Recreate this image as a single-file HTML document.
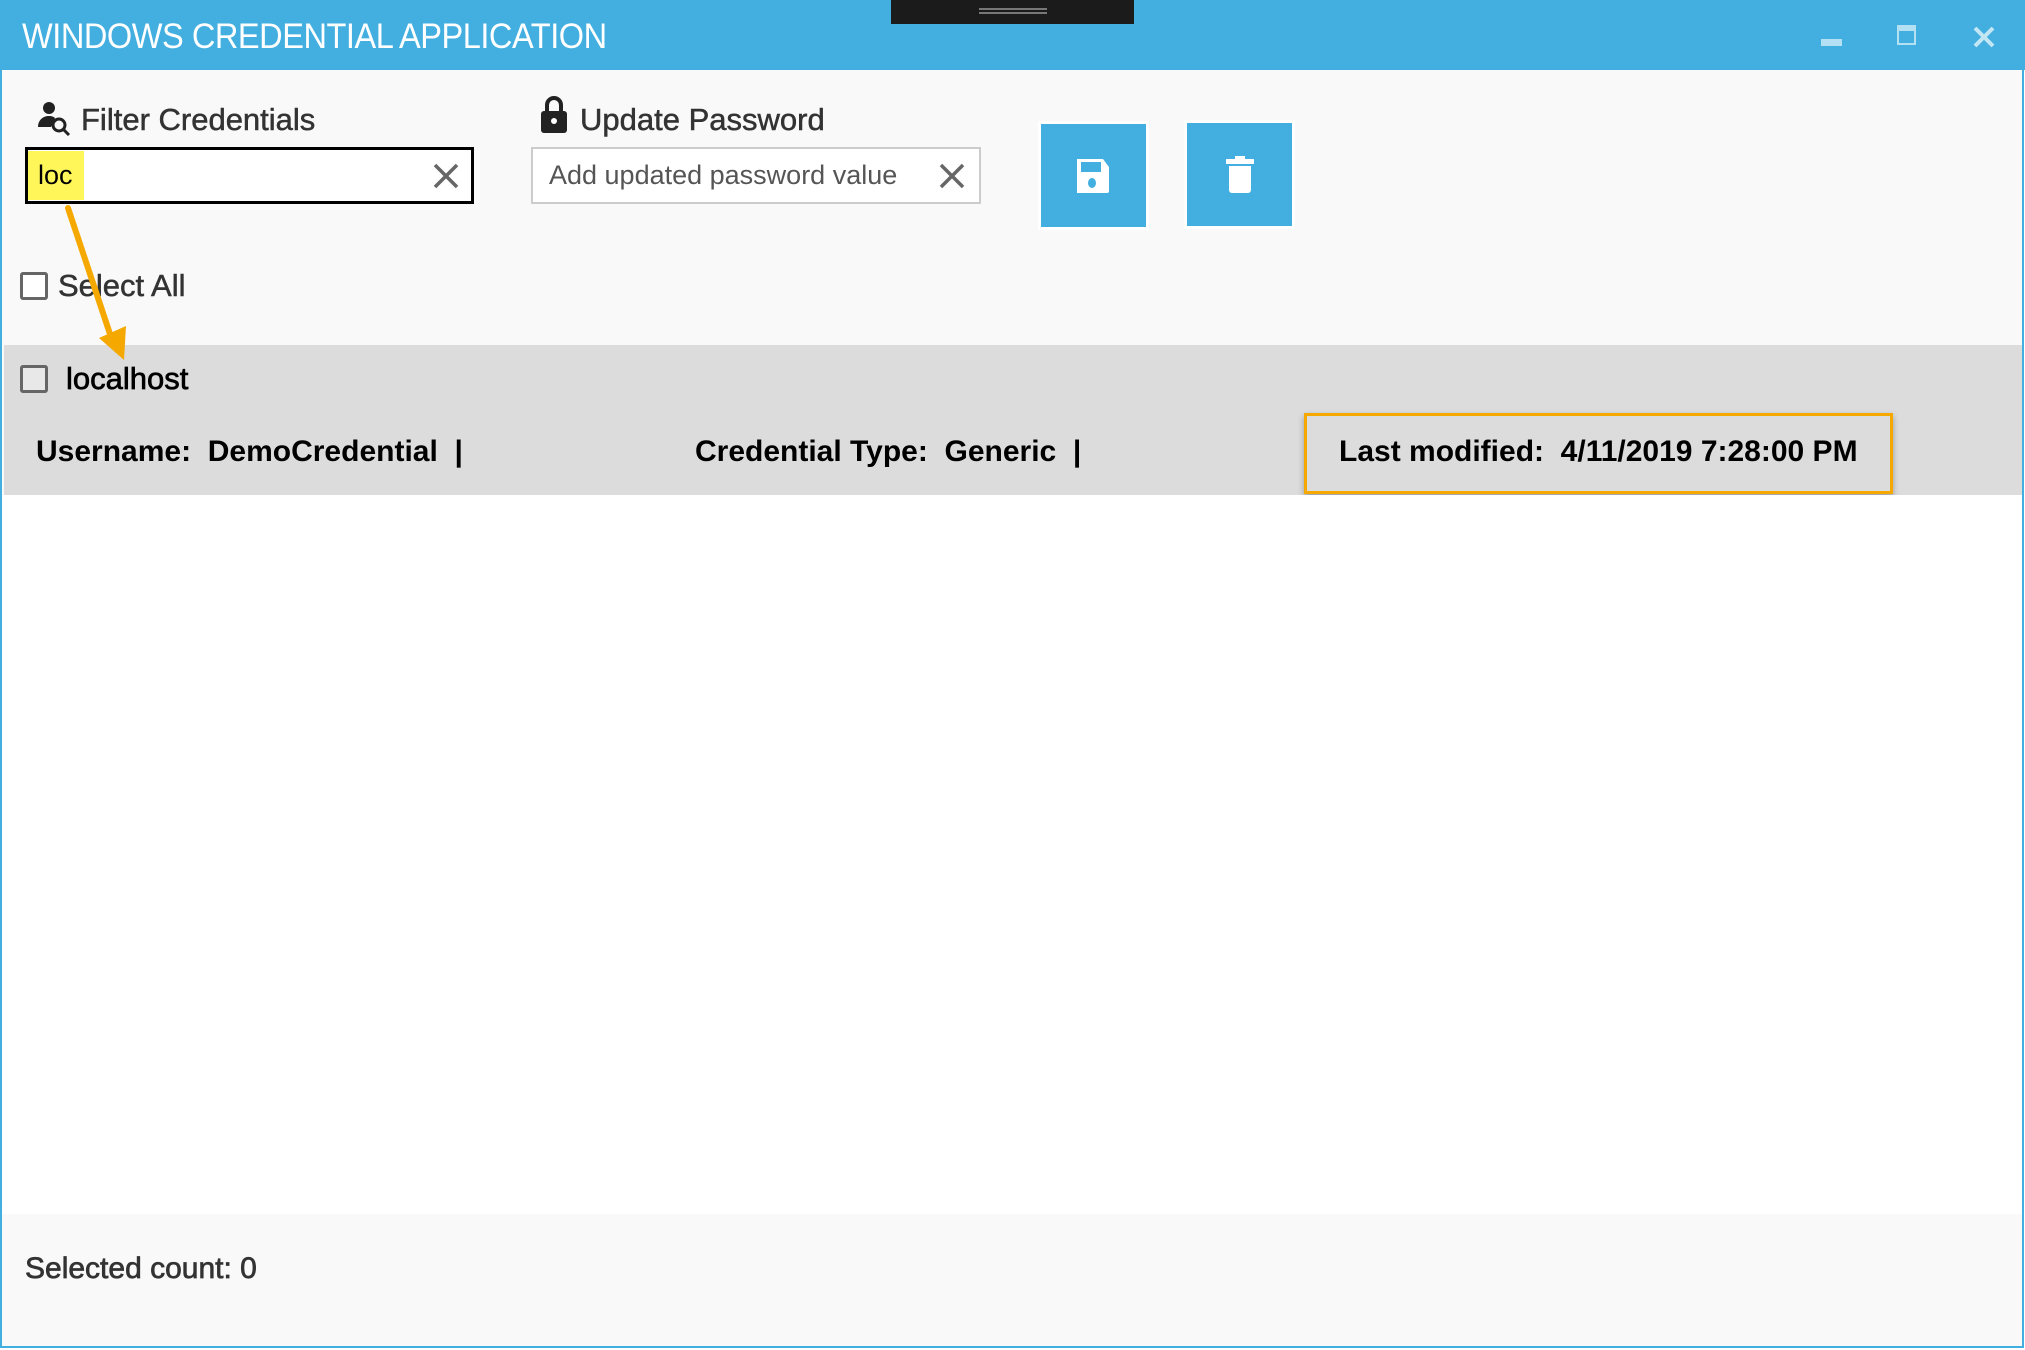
<!DOCTYPE html>
<html><head><meta charset="utf-8"><style>
*{margin:0;padding:0;box-sizing:border-box}
body{width:2025px;height:1350px;background:#fff;position:relative;overflow:hidden;font-family:"Liberation Sans",sans-serif;color:#222}
.a{position:absolute}
.t{position:absolute;white-space:nowrap;line-height:1}
</style></head><body>
<div class="a" style="left:0;top:0;width:2024px;height:1348px;background:#f9f9f9;border:2px solid #42afe0;border-top:none"></div>
<div class="a" style="left:0;top:0;width:2025px;height:70px;background:#42afe0"></div>
<div class="t" style="left:22px;top:19px;font-size:35px;color:#fff;letter-spacing:-0.5px;transform:scaleX(0.93);transform-origin:left">WINDOWS CREDENTIAL APPLICATION</div>
<div class="a" style="left:891px;top:0;width:243px;height:24px;background:#1b1b1b"></div>
<div class="a" style="left:979px;top:8px;width:68px;height:2px;background:#777"></div>
<div class="a" style="left:979px;top:12px;width:68px;height:2px;background:#777"></div>
<div class="a" style="left:1821px;top:39px;width:21px;height:7px;background:#b3e0f3"></div>
<div class="a" style="left:1897px;top:25px;width:19px;height:20px;border:2px solid #b3e0f3;border-top-width:6px"></div>
<svg class="a" style="left:1972px;top:25px" width="24" height="24"><path d="M3 3L21 21M21 3L3 21" stroke="#c3e6f5" stroke-width="4"/></svg>

<svg class="a" style="left:36px;top:101px" width="36" height="35" viewBox="0 0 36 35"><circle cx="13" cy="7" r="6" fill="#222"/><path d="M2 26c0-7 5-11 11-11 3 0 5 1 6 2l-4 9z" fill="#222"/><circle cx="23" cy="24" r="6" fill="none" stroke="#222" stroke-width="3"/><path d="M27 28l6 6" stroke="#222" stroke-width="3"/></svg>
<div class="t" style="left:81px;top:104px;font-size:31px;color:#333;-webkit-text-stroke:0.5px #333">Filter Credentials</div>
<div class="a" style="left:25px;top:147px;width:449px;height:57px;background:#fff;border:3px solid #000"></div>
<div class="a" style="left:28px;top:151px;width:56px;height:49px;background:#fff75a"></div>
<div class="t" style="left:38px;top:162px;font-size:27px;color:#000">loc</div>
<svg class="a" style="left:432px;top:162px" width="28" height="28"><path d="M3 3L25 25M25 3L3 25" stroke="#666" stroke-width="3.5"/></svg>

<svg class="a" style="left:540px;top:96px" width="28" height="38" viewBox="0 0 28 38"><path d="M7 16V9a7 7 0 0 1 14 0v7" fill="none" stroke="#222" stroke-width="4"/><rect x="1" y="15" width="26" height="22" rx="3" fill="#222"/><circle cx="14" cy="25" r="3" fill="#fff"/></svg>
<div class="t" style="left:580px;top:104px;font-size:31px;color:#333;-webkit-text-stroke:0.5px #333">Update Password</div>
<div class="a" style="left:531px;top:147px;width:450px;height:57px;background:#fff;border:2px solid #ccc"></div>
<div class="t" style="left:549px;top:162px;font-size:27px;color:#555">Add updated password value</div>
<svg class="a" style="left:938px;top:162px" width="28" height="28"><path d="M3 3L25 25M25 3L3 25" stroke="#666" stroke-width="3.5"/></svg>

<div class="a" style="left:1038px;top:121px;width:111px;height:109px;background:#fff"></div>
<div class="a" style="left:1041px;top:124px;width:105px;height:103px;background:#42afe0"></div>
<svg class="a" style="left:1075px;top:157px" width="36" height="38" viewBox="0 0 36 38"><path d="M2 2h26l6 8v24a2 2 0 0 1-2 2H2z" fill="#fff"/><rect x="6" y="5" width="20" height="10" fill="#42afe0"/><ellipse cx="17" cy="26" rx="4" ry="5" fill="#42afe0"/></svg>
<div class="a" style="left:1184px;top:120px;width:111px;height:109px;background:#fff"></div>
<div class="a" style="left:1187px;top:123px;width:105px;height:103px;background:#42afe0"></div>
<svg class="a" style="left:1225px;top:155px" width="30" height="40" viewBox="0 0 30 40"><rect x="1" y="4" width="28" height="5" fill="#fff"/><rect x="10" y="1" width="10" height="4" fill="#fff"/><path d="M4 11h22v24a3 3 0 0 1-3 3H7a3 3 0 0 1-3-3z" fill="#fff"/></svg>

<div class="a" style="left:20px;top:272px;width:28px;height:28px;border:3px solid #666;border-radius:3px;background:#fff"></div>
<div class="t" style="left:58px;top:270px;font-size:31px;color:#333;-webkit-text-stroke:0.5px #333">Select All</div>

<div class="a" style="left:4px;top:345px;width:2018px;height:150px;background:#dcdcdc"></div>
<div class="a" style="left:20px;top:365px;width:28px;height:28px;border:3px solid #666;border-radius:3px;background:#e8e8e8"></div>
<div class="t" style="left:66px;top:363px;font-size:31px;color:#000;-webkit-text-stroke:0.7px #000">localhost</div>
<div class="t" style="left:36px;top:437px;font-size:30px;color:#000;font-weight:bold">Username:&nbsp; DemoCredential&nbsp; |</div>
<div class="t" style="left:695px;top:437px;font-size:30px;color:#000;font-weight:bold">Credential Type:&nbsp; Generic&nbsp; |</div>
<div class="a" style="left:1304px;top:413px;width:589px;height:81px;border:3px solid #f5a800;box-shadow:0 3px 6px rgba(0,0,0,.3)"></div>
<div class="t" style="left:1339px;top:437px;font-size:30px;color:#000;font-weight:bold">Last modified:&nbsp; 4/11/2019 7:28:00 PM</div>

<div class="a" style="left:2px;top:495px;width:2020px;height:719px;background:#fff"></div>
<div class="t" style="left:25px;top:1254px;font-size:30px;color:#333;-webkit-text-stroke:0.7px #333">Selected count: 0</div>

<svg class="a" style="left:0;top:0" width="200" height="380"><path d="M68 208L112 340" stroke="#f5a800" stroke-width="6" stroke-linecap="round"/><path d="M99 338L124 360L126 326z" fill="#f5a800"/></svg>
</body></html>
